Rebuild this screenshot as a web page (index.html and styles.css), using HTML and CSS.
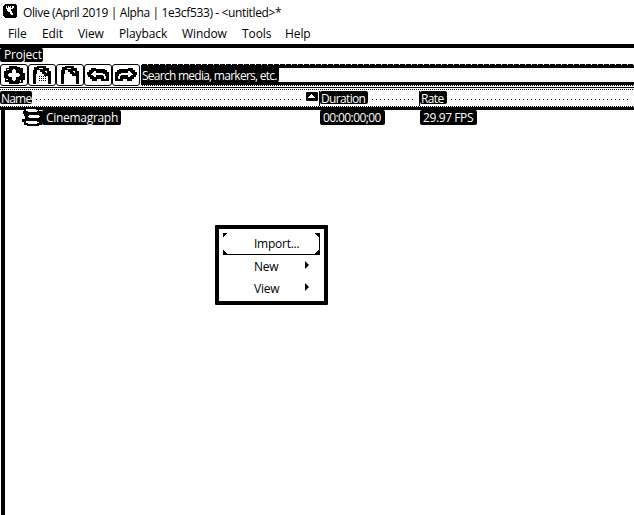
FILE: index.html
```html
<!DOCTYPE html>
<html lang="en">
<head>
<meta charset="utf-8">
<title>Olive</title>
<link rel="stylesheet" href="styles.css">
</head>
<body>
<div class="app">
  <header class="titlebar">
    <svg class="logo" viewBox="0 0 14 14"><path d="M2 0h10l2 2v10l-2 2H2l-2-2V2z"/><path class="w" d="M3 2h1v2h1V2h1v1h1V2h1v2h1V2h2v2h-1v1H8v2h1v2h1v2H8v-1H7V8H5V7H4V5H3z"/></svg>
    <span>Olive (April 2019 | Alpha | 1e3cf533) - &lt;untitled&gt;*</span>
  </header>
  <nav class="menubar"><span>File</span><span>Edit</span><span>View</span><span>Playback</span><span>Window</span><span>Tools</span><span>Help</span></nav>
  <div class="dock"><span class="label project">Project</span></div>
  <div class="toolbar">
    <div class="tools">
      <button><svg viewBox="0 0 24 20"><path d="M7 1h8v1h3v1h3v5h2v7h-2v3h-4v1H7v-2H3v-4H2V6h2V3h3z"/><path class="w" d="M11 4h2v1h1v3h3v1h1v2h-1v1h-3v3h-1v1h-2v-1h-1v-3H7v-1H6V9h1V8h3V5h1zM5 4h2v1H5zM18 15h1v2h-1zM4 14h2v1H4z"/></svg></button>
      <button><svg viewBox="0 0 24 20"><path d="M3 19V5h1V2h3V1h9v2h3v3h2v13h-3v-8h-4V9h-2V7h-2V5H7v4H6v10z"/><path class="w" d="M9 3h4v1H9zM15 6h2v2h-1V7h-1z"/><path class="grain" d="M9 11.5h7M9 13.5h7M9 15.5h7"/></svg></button>
      <button><svg viewBox="0 0 24 20"><path d="M3 19V5h1V2h3V1h9v2h3v3h2v13h-3v-8h-4V9h-2V7h-2V5H7v4H6v10z"/><path class="w" d="M9 3h4v1H9zM15 6h2v2h-1V7h-1z"/></svg></button>
      <button><svg viewBox="0 0 24 20"><path d="M1 7h2V5h2V3h5v1h9v1h2v2h2v9h-8v-2h-4v2H6v-2H4v-2H2v-2H1z"/><path class="w" d="M5 9h1V8h1V7h1V6h2v2h7v1h2v2h1v3h-2v-3h-1v-1h-7v2H8v-1H7v-1H5z"/></svg></button>
      <button><svg viewBox="0 0 24 20"><path d="M23 7h-2V5h-2V3h-5v1H5v1H3v2H1v9h8v-2h4v2h5v-2h2v-2h2v-2h1z"/><path class="w" d="M19 9h-1V8h-1V7h-1V6h-2v2H7v1H5v2H4v3h2v-3h1v-1h7v2h2v-1h1v-1h2z"/></svg></button>
    </div>
    <div class="search"><span class="label">Search media, markers, etc.</span></div>
  </div>
  <div class="columns">
    <div class="col"><span class="label name">Name</span><i class="dots"></i><span class="sort"><svg viewBox="0 0 11 9"><path class="w" d="M2 6h7V5H8V4H7V3H6V2H5v1H4v1H3v1H2z"/></svg></span></div>
    <div class="col ruled"><span class="label">Duration</span><i class="dots"></i></div>
    <div class="col ruled"><span class="label">Rate</span><i class="dots"></i></div>
  </div>
  <main class="list">
    <div class="row">
      <div class="item"><svg class="seq" viewBox="0 0 20 18"><path d="M2 0h15v3h3v14h-3v1H5v-1H2v-3H0v-3h3V8H2V6H1V3h1z"/><path class="w" d="M4 1h10v1h2v1h-1v1H6V3H4zM7 7h10v1h1v1h-1v1H7V9H6V8h1zM4 13h11v1h2v1h-2v1H6v-1H4z"/></svg><span class="label clip">Cinemagraph</span></div>
      <div><span class="label time">00:00:00;00</span></div>
      <div><span class="label fps">29.97 FPS</span></div>
    </div>
  </main>
  <div class="popup">
    <div class="option selected"><span>Import...</span></div>
    <div class="option"><span>New</span><b></b></div>
    <div class="option"><span>View</span><b></b></div>
  </div>
</div>
</body>
</html>
```
FILE: styles.css
```css
* { box-sizing: border-box; }
body { margin: 0; background: #fff; color: #000; font: 12px/16px "Open Sans", "Noto Sans", sans-serif; overflow: hidden; }
svg { display: block; fill: #000; shape-rendering: crispEdges; flex: none; }
.w { fill: #fff; }
.app { position: relative; width: 634px; height: 515px; display: flex; flex-direction: column; white-space: nowrap; }
.titlebar { height: 24px; padding: 1px 0 0 3px; display: flex; align-items: center; gap: 6px; letter-spacing: -0.37px; }
.logo { width: 14px; height: 14px; margin-top: -3px; }
.menubar { height: 20px; display: grid; grid-template-columns: 34px 36px 41px 63px 60px 43px 60px; padding-left: 8px; line-height: 20px; letter-spacing: -0.1px; }
.dock { height: 20px; border-top: 4px solid #000; display: flex; }
.label { background: #000; color: #fff; display: block; flex: none; height: 14px; line-height: 13px; padding: 0 1px; border-radius: 2px; }
.project { width: 43px; padding-left: 4px; letter-spacing: -0.2px; }

.toolbar { height: 22px; display: flex; }
.tools { display: flex; width: 141px; flex: none; }
button { width: 28px; height: 22px; padding: 0 1px; border: 1px solid #000; background: #fff; border-radius: 3px; }
button svg { width: 24px; height: 20px; }
.grain { fill: none; stroke: #000; stroke-dasharray: 1 1; }
.search {
  flex: 1;
  padding-top: 4px;
  background:
    repeating-linear-gradient(90deg, #fff 0 1px, #000 1px 6px) 0 0 / 100% 1px no-repeat,
    linear-gradient(#000, #000) 0 1px / 100% 3px no-repeat,
    linear-gradient(#000, #000) 0 18px / 100% 3px no-repeat,
    repeating-linear-gradient(90deg, #fff 0 1px, #000 1px 2px) 0 21px / 100% 1px no-repeat;
}
.search .label { width: 138px; height: 15px; line-height: 16px; letter-spacing: -0.74px; border-radius: 0 0 4px 0; }

.columns {
  height: 24px;
  padding-top: 5px;
  display: grid;
  grid-template-columns: 319px 100px 1fr;
  background:
    linear-gradient(#000, #000) 0 1px / 100% 1px no-repeat,
    repeating-linear-gradient(90deg, #000 0 1px, #fff 1px 2px) 0 3px / 100% 1px no-repeat,
    repeating-linear-gradient(90deg, #000 0 1px, #fff 1px 2px) 0 20px / 100% 1px no-repeat,
    linear-gradient(#000, #000) 0 21px / 100% 3px no-repeat;
}
.col { display: flex; height: 15px; min-width: 0; }
.ruled { border-left: 1px solid #000; }
.ruled .label { letter-spacing: -0.65px; padding-right: 3px; }
.name { width: 32px; letter-spacing: -0.8px; }
.dots { flex: 1; margin: 8px 4px 0; height: 1px; background: repeating-linear-gradient(90deg, #000 0 1px, #fff 1px 4px); }
.sort { width: 12px; height: 9px; background: #000; margin: 1px 1px 0 0; border-radius: 1px; }
.sort svg { width: 11px; height: 9px; }
.col .label { height: 13px; line-height: 15px; }

.list { flex: 1; margin-left: 1px; border-left: 4px solid #000; }
.row { display: grid; grid-template-columns: 315px 100px 1fr; }
.item { display: flex; padding-left: 17px; height: 16px; }
.seq { width: 20px; height: 18px; margin-top: -2px; }
.row .label { height: 15px; line-height: 15px; }
.clip { width: 79px; padding-left: 4px; letter-spacing: -0.3px; }
.time { width: 65px; padding-left: 3px; letter-spacing: -0.6px; }
.fps { width: 57px; padding-left: 3px; letter-spacing: -0.4px; }

.popup { position: absolute; left: 215px; top: 225px; width: 113px; height: 80px; border: 4px solid #000; border-radius: 1px; background: #fff; padding: 4px; }
.option { height: 22px; padding: 1px 11px 0 31px; display: flex; align-items: center; justify-content: space-between; letter-spacing: -0.25px; }
.option b { border-left: 4px solid #000; border-top: 4px solid transparent; border-bottom: 4px solid transparent; margin-top: -3px; }
.selected {
  padding-right: 0;
  border-right: 1px solid #000;
  border-bottom: 1px solid #000;
  background:
    linear-gradient(135deg, #000 3px, transparent 3px),
    linear-gradient(225deg, #000 3px, transparent 3px),
    linear-gradient(45deg, #000 3px, transparent 3px),
    linear-gradient(315deg, #000 3px, transparent 3px);
}
```
